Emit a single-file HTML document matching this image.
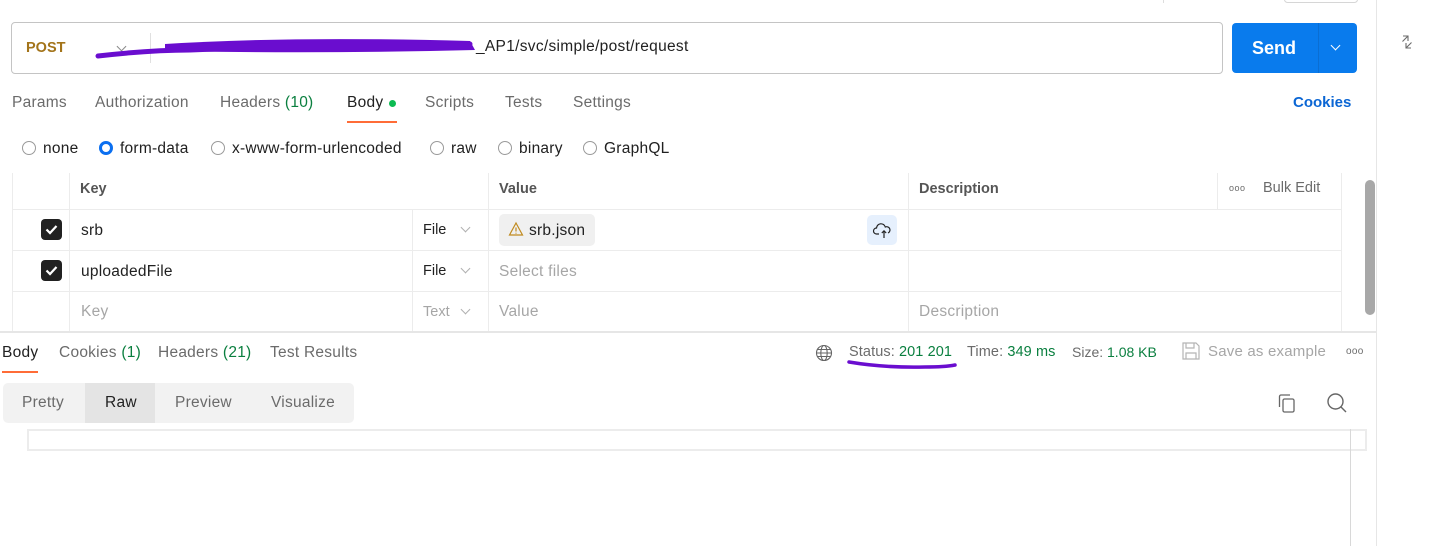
<!DOCTYPE html>
<html><head><meta charset="utf-8"><style>
*{box-sizing:border-box;margin:0;padding:0}
body{width:1436px;height:546px;background:#fff;font-family:"Liberation Sans",sans-serif;font-size:14px;color:#212121;position:relative;overflow:hidden}
.a{position:absolute;white-space:nowrap}
.g{color:#6b6b6b}
.gr{color:#0a7f3f}
.ph{color:#a6a6a6}
.t{font-size:15.5px;letter-spacing:0.25px}
.hl{position:absolute;background:#ececec;height:1px}
.vl{position:absolute;background:#ececec;width:1px}
.radio{position:absolute;width:14px;height:14px;border:1px solid #9a9a9a;border-radius:50%}
.cb{position:absolute;width:21px;height:21px;background:#212121;border-radius:4px}
.chev{position:absolute;width:7px;height:7px;border-right:1px solid #8a8a8a;border-bottom:1px solid #8a8a8a;transform:rotate(45deg)}
</style></head><body>
<div class="vl" style="left:1376px;top:0;height:546px;background:#e6e6e6"></div>
<div class="a" style="left:1284px;top:-4px;width:74px;height:7px;border:1px solid #d6d6d6;border-radius:4px"></div>
<div class="vl" style="left:1163px;top:0;height:3px;background:#ddd"></div>
<svg class="a" style="left:1399px;top:34px" width="16" height="16" viewBox="0 0 16 16" fill="none" stroke="#6b6b6b" stroke-width="1.1"><path d="M4 2h5v5M9 2L3.5 7.5M12 14H7V9M7 14l5.5-5.5"/></svg>

<div class="a" style="left:11px;top:22px;width:1212px;height:52px;border:1px solid #c4c4c4;border-radius:4px"></div>
<div class="a" style="left:26px;top:40px;color:#a3741a;font-weight:bold;font-size:14.5px">POST</div>
<div class="chev" style="left:118px;top:43px"></div>
<div class="vl" style="left:150px;top:33px;height:30px;background:#e0e0e0"></div>
<div class="a" style="left:476px;top:38px;font-size:15.5px;letter-spacing:0.3px">_AP1/svc/simple/post/request</div>
<svg class="a" style="left:90px;top:36px" width="400" height="24" viewBox="0 0 400 24"><path d="M8 20 Q60 14 100 14 L150 12 Q200 6 260 10 L380 8" stroke="#6a0dcf" stroke-width="5" fill="none" stroke-linecap="round"/><path d="M75 8 Q200 0 380 5 L385 14 Q230 18 75 15Z" fill="#6a0dcf"/></svg>

<div class="a" style="left:1232px;top:23px;width:125px;height:50px;background:#097bed;border-radius:4px"></div>
<div class="vl" style="left:1318px;top:23px;height:50px;background:#0a6ed3"></div>
<div class="a" style="left:1252px;top:38px;color:#fff;font-weight:bold;font-size:18px">Send</div>
<div class="chev" style="left:1332px;top:42px;border-color:#fff"></div>

<div class="a g t" style="left:12px;top:94px">Params</div>
<div class="a g t" style="left:95px;top:94px">Authorization</div>
<div class="a g t" style="left:220px;top:94px">Headers <span class="gr">(10)</span></div>
<div class="a t" style="left:347px;top:94px">Body</div>
<div class="a" style="left:389px;top:100px;width:7px;height:7px;background:#0cbb52;border-radius:50%"></div>
<div class="a" style="left:347px;top:121px;width:50px;height:2px;background:#ff6c37"></div>
<div class="a g t" style="left:425px;top:94px">Scripts</div>
<div class="a g t" style="left:505px;top:94px">Tests</div>
<div class="a g t" style="left:573px;top:94px">Settings</div>
<div class="a" style="left:1293px;top:94px;font-size:15px;color:#0b66d4;font-weight:bold">Cookies</div>

<div class="radio" style="left:22px;top:141px"></div><div class="a t" style="left:43px;top:140px">none</div>
<div class="radio" style="left:99px;top:141px;border:3px solid #0b6ff0"></div><div class="a t" style="left:120px;top:140px">form-data</div>
<div class="radio" style="left:211px;top:141px"></div><div class="a t" style="left:232px;top:140px">x-www-form-urlencoded</div>
<div class="radio" style="left:430px;top:141px"></div><div class="a t" style="left:451px;top:140px">raw</div>
<div class="radio" style="left:498px;top:141px"></div><div class="a t" style="left:519px;top:140px">binary</div>
<div class="radio" style="left:583px;top:141px"></div><div class="a t" style="left:604px;top:140px">GraphQL</div>

<div class="hl" style="left:12px;top:209px;width:1330px"></div>
<div class="hl" style="left:12px;top:250px;width:1330px"></div>
<div class="hl" style="left:12px;top:291px;width:1330px"></div>
<div class="hl" style="left:0;top:331px;width:1376px;height:2px;background:#e6e6e6"></div>
<div class="vl" style="left:12px;top:173px;height:158px"></div>
<div class="vl" style="left:69px;top:173px;height:158px"></div>
<div class="vl" style="left:412px;top:209px;height:122px"></div>
<div class="vl" style="left:488px;top:173px;height:158px"></div>
<div class="vl" style="left:908px;top:173px;height:158px"></div>
<div class="vl" style="left:1217px;top:173px;height:36px"></div>
<div class="vl" style="left:1341px;top:173px;height:158px"></div>
<div class="a" style="left:80px;top:181px;font-weight:bold;color:#555;font-size:14.5px">Key</div>
<div class="a" style="left:499px;top:181px;font-weight:bold;color:#555;font-size:14.5px">Value</div>
<div class="a" style="left:919px;top:181px;font-weight:bold;color:#555;font-size:14.5px">Description</div>
<div class="a g" style="left:1229px;top:183px;font-size:9px;letter-spacing:0.5px">ooo</div>
<div class="a g" style="left:1263px;top:180px;font-size:14.5px">Bulk Edit</div>
<div class="a" style="left:1365px;top:180px;width:10px;height:135px;background:#a8a8a8;border-radius:5px"></div>

<div class="cb" style="left:41px;top:219px"></div><svg class="a" style="left:41px;top:219px" width="21" height="21"><path d="M5.5 10.5l3.5 3.5 6.5-7" stroke="#fff" stroke-width="2.2" fill="none"/></svg>
<div class="a t" style="left:81px;top:222px">srb</div>
<div class="a" style="left:423px;top:222px;font-size:14.5px">File</div><div class="chev" style="left:462px;top:224px;border-color:#b0b0b0"></div>
<div class="a" style="left:499px;top:214px;width:96px;height:32px;background:#f0f0f0;border-radius:5px"></div>
<svg class="a" style="left:508px;top:221px" width="16" height="16" viewBox="0 0 16 16" fill="none" stroke="#c08a1e" stroke-width="1.2"><path d="M8 2L14.5 14H1.5Z"/><path d="M8 6.5v4M8 11.8v.8"/></svg>
<div class="a t" style="left:529px;top:222px">srb.json</div>
<div class="a" style="left:867px;top:215px;width:30px;height:30px;background:#e6f0fd;border-radius:5px"></div>
<svg class="a" style="left:872px;top:220px" width="20" height="20" viewBox="0 0 20 20" fill="none" stroke="#222" stroke-width="1.2"><path d="M7 14H4.5a3 3 0 0 1 0-6 4.5 4.5 0 0 1 8.8-1A3.2 3.2 0 0 1 16 13"/><path d="M12 18v-7M9.8 13L12 10.8 14.2 13"/></svg>

<div class="cb" style="left:41px;top:260px"></div><svg class="a" style="left:41px;top:260px" width="21" height="21"><path d="M5.5 10.5l3.5 3.5 6.5-7" stroke="#fff" stroke-width="2.2" fill="none"/></svg>
<div class="a t" style="left:81px;top:263px">uploadedFile</div>
<div class="a" style="left:423px;top:263px;font-size:14.5px">File</div><div class="chev" style="left:462px;top:265px;border-color:#b0b0b0"></div>
<div class="a ph t" style="left:499px;top:263px">Select files</div>

<div class="a ph t" style="left:81px;top:303px">Key</div>
<div class="a ph" style="left:423px;top:304px;font-size:14.5px">Text</div><div class="chev" style="left:462px;top:306px;border-color:#b0b0b0"></div>
<div class="a ph t" style="left:499px;top:303px">Value</div>
<div class="a ph t" style="left:919px;top:303px">Description</div>

<div class="a t" style="left:2px;top:344px">Body</div>
<div class="a" style="left:2px;top:371px;width:36px;height:2px;background:#ff6c37"></div>
<div class="a g t" style="left:59px;top:344px">Cookies <span class="gr">(1)</span></div>
<div class="a g t" style="left:158px;top:344px">Headers <span class="gr">(21)</span></div>
<div class="a g t" style="left:270px;top:344px">Test Results</div>

<svg class="a" style="left:815px;top:344px" width="18" height="18" viewBox="0 0 18 18" fill="none" stroke="#666" stroke-width="1.1"><circle cx="9" cy="9" r="7.5"/><ellipse cx="9" cy="9" rx="3.2" ry="7.5"/><path d="M1.5 9h15M2.5 5.5h13M2.5 12.5h13"/></svg>
<div class="a g" style="left:849px;top:344px;font-size:14.5px;letter-spacing:0.1px">Status: <span class="gr">201 201</span></div>
<svg class="a" style="left:845px;top:358px" width="120" height="14"><path d="M4 4 Q40 10 80 9 Q100 9 110 7" stroke="#6a0dcf" stroke-width="3.5" fill="none" stroke-linecap="round"/></svg>
<div class="a g" style="left:967px;top:344px;font-size:14.5px;letter-spacing:0.1px">Time: <span class="gr">349 ms</span></div>
<div class="a g" style="left:1072px;top:344px;font-size:14px">Size: <span class="gr">1.08 KB</span></div>
<svg class="a" style="left:1181px;top:341px" width="20" height="20" viewBox="0 0 20 20" fill="none" stroke="#b5b5b5" stroke-width="1.2"><path d="M2 2h13l3 3v13H2Z"/><path d="M5 2v5h8V2M5 18v-6h10v6"/></svg>
<div class="a" style="left:1208px;top:343px;font-size:15px;color:#a6a6a6;letter-spacing:0.2px">Save as example</div>
<div class="a g" style="left:1346px;top:346px;font-size:10px;letter-spacing:0.3px">ooo</div>

<div class="a" style="left:3px;top:383px;width:351px;height:40px;background:#f2f2f2;border-radius:5px"></div>
<div class="a" style="left:85px;top:383px;width:70px;height:40px;background:#e4e4e4"></div>
<div class="a g t" style="left:22px;top:394px">Pretty</div>
<div class="a t" style="left:105px;top:394px">Raw</div>
<div class="a g t" style="left:175px;top:394px">Preview</div>
<div class="a g t" style="left:271px;top:394px">Visualize</div>

<svg class="a" style="left:1276px;top:392px" width="22" height="22" viewBox="0 0 22 22" fill="none" stroke="#666" stroke-width="1.3"><rect x="7" y="7" width="11" height="13" rx="1.5"/><path d="M3.5 15V4.5A1.5 1.5 0 0 1 5 3h9"/></svg>
<svg class="a" style="left:1326px;top:392px" width="22" height="22" viewBox="0 0 22 22" fill="none" stroke="#666" stroke-width="1.4"><circle cx="9.5" cy="9.5" r="7.5"/><path d="M15 15l5 5"/></svg>

<div class="a" style="left:27px;top:429px;width:1340px;height:22px;border:2px solid #ececec"></div>
<div class="vl" style="left:1350px;top:429px;height:117px;background:#d8d8d8"></div>
</body></html>
